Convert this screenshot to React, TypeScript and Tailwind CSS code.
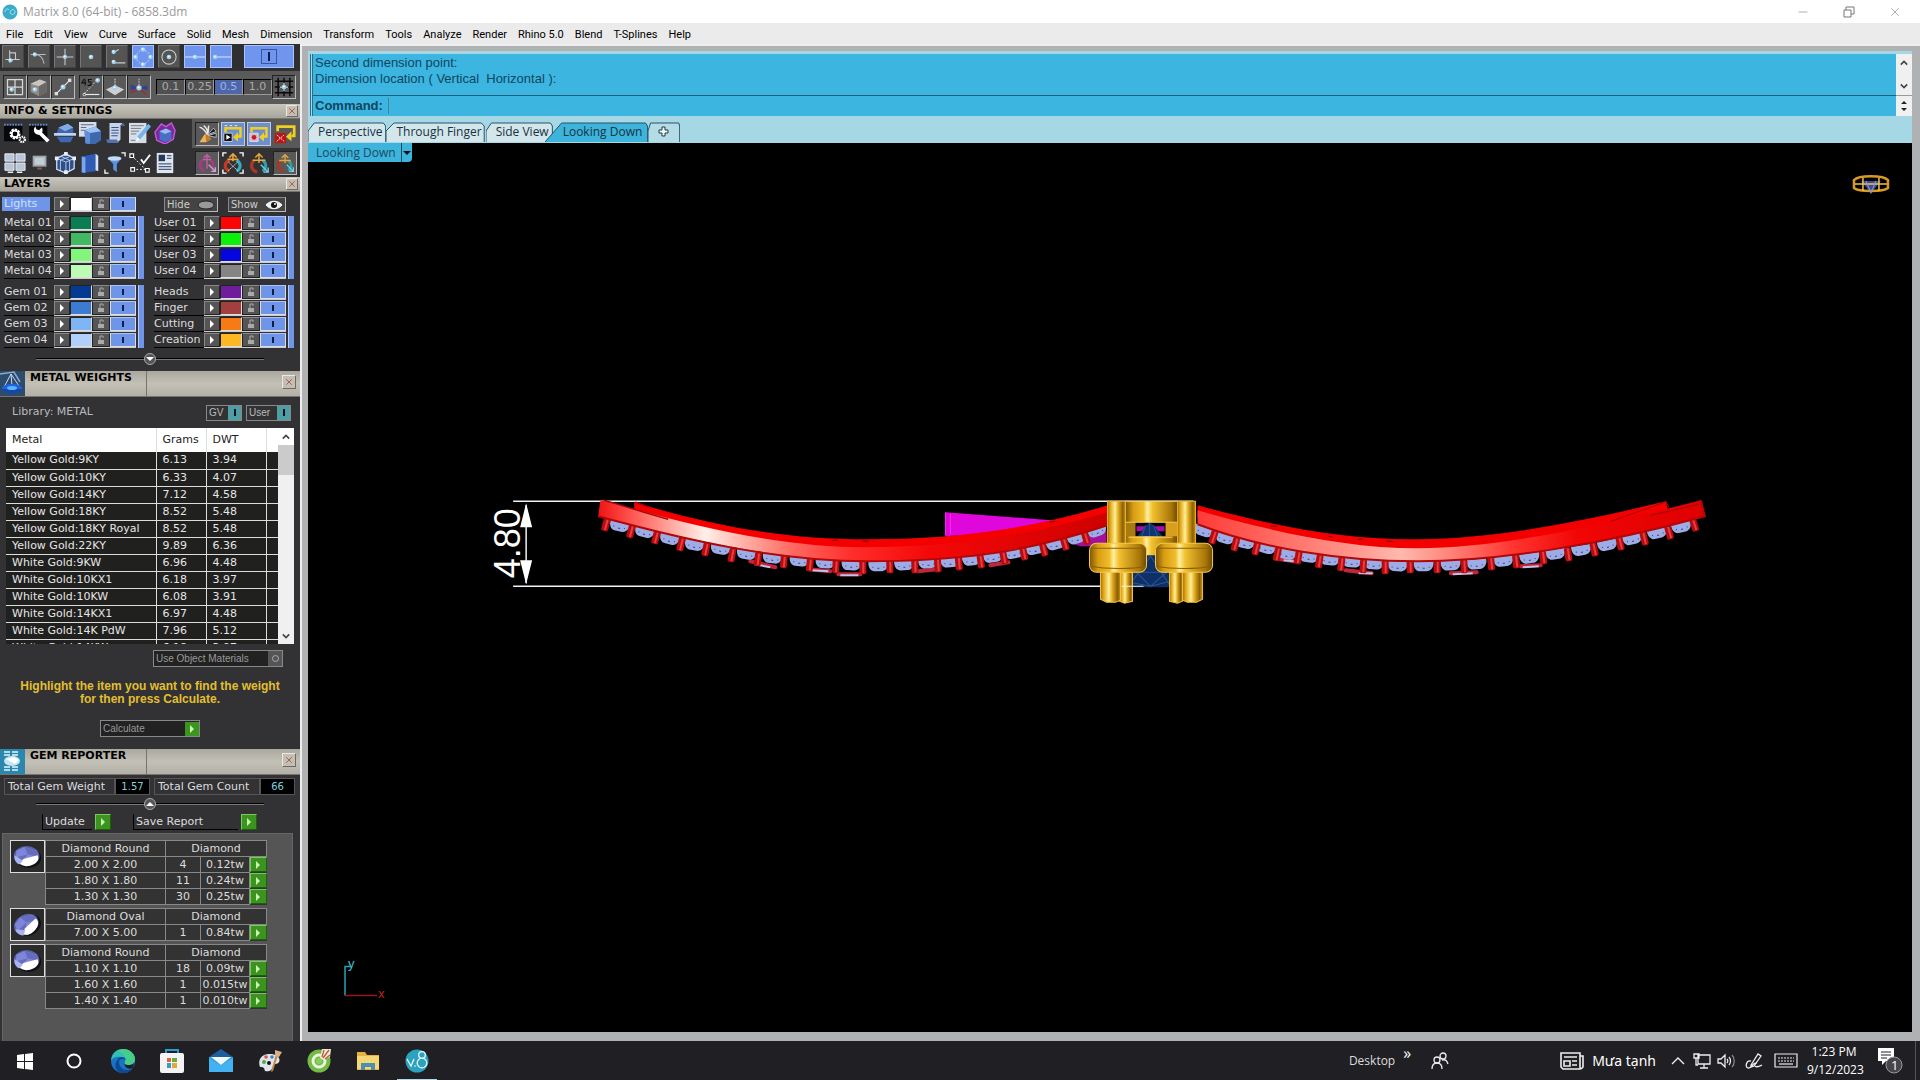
import React from 'react';
import { Minus, X } from 'lucide-react';

type Point = [number, number];

const menuItems = [
  'File', 'Edit', 'View', 'Curve', 'Surface', 'Solid', 'Mesh', 'Dimension', 'Transform',
  'Tools', 'Analyze', 'Render', 'Rhino 5.0', 'Blend', 'T-Splines', 'Help',
];

const metals = [
  ['Yellow Gold:9KY', '6.13', '3.94'],
  ['Yellow Gold:10KY', '6.33', '4.07'],
  ['Yellow Gold:14KY', '7.12', '4.58'],
  ['Yellow Gold:18KY', '8.52', '5.48'],
  ['Yellow Gold:18KY Royal', '8.52', '5.48'],
  ['Yellow Gold:22KY', '9.89', '6.36'],
  ['White Gold:9KW', '6.96', '4.48'],
  ['White Gold:10KX1', '6.18', '3.97'],
  ['White Gold:10KW', '6.08', '3.91'],
  ['White Gold:14KX1', '6.97', '4.48'],
  ['White Gold:14K PdW', '7.96', '5.12'],
  ['White Gold:14KW', '6.18', '3.97'],
];

const gemGroups = [
  {
    name: 'Diamond Round',
    oval: false,
    rows: [['2.00 X 2.00', '4', '0.12tw'], ['1.80 X 1.80', '11', '0.24tw'], ['1.30 X 1.30', '30', '0.25tw']],
  },
  { name: 'Diamond Oval', oval: true, rows: [['7.00 X 5.00', '1', '0.84tw']] },
  {
    name: 'Diamond Round',
    oval: false,
    rows: [['1.10 X 1.10', '18', '0.09tw'], ['1.60 X 1.60', '1', '0.015tw'], ['1.40 X 1.40', '1', '0.010tw']],
  },
];

const metalLayers = [['Metal 01', '#0a7d52'], ['Metal 02', '#43b863'], ['Metal 03', '#82f57c'], ['Metal 04', '#bdfcb5']];
const gemLayers = [['Gem 01', '#053a93'], ['Gem 02', '#3d7bd0'], ['Gem 03', '#7fb5f5'], ['Gem 04', '#b0d0fa']];
const userLayers = [['User 01', '#fa0505'], ['User 02', '#0cf00c'], ['User 03', '#0505dd'], ['User 04', '#858585']];
const otherLayers = [['Heads', '#6f1d9a'], ['Finger', '#a33f3f'], ['Cutting', '#f77b14'], ['Creation', '#fcb823']];

/* ---------- toolbar icons, all on a 24 x 24 grid ---------- */

const Dot = ({ x, y, r = 2 }: { x: number; y: number; r?: number }) => (
  <g>
    <circle cx={x} cy={y} r={r} fill="#9fd0ee" />
    <circle cx={x - 0.5} cy={y - 0.7} r={r / 2.4} fill="#f2fbff" />
  </g>
);

const icons: Record<string, React.ReactNode> = {
  ortho: <><path d="M3 15h17M8 4v15M8 7h7v8" stroke="#c9c9c9" strokeWidth="1.3" fill="none" /><Dot x={9} y={16} r={2.6} /></>,
  tangent: <><path d="M2 9h18M7 9c6 0 10 4 11 11" stroke="#b9b9b9" strokeWidth="1.3" fill="none" /><Dot x={7} y={9} r={2.6} /></>,
  cross: <><path d="M2 12h20M12 2v20" stroke="#c9c9c9" strokeWidth="1.3" /><Dot x={12} y={12} r={2.6} /></>,
  point: <Dot x={12} y={12} r={2.8} />,
  near: <><path d="M8 19h14M9 6l5-3" stroke="#c9c9c9" strokeWidth="1.3" /><Dot x={8} y={6} r={2.6} /><Dot x={8} y={18} r={2.6} /></>,
  quad: <><circle cx="12" cy="12" r="8" stroke="#dbe7ff" fill="none" strokeDasharray="2 2" /><Dot x={12} y={3} r={2.8} /><Dot x={12} y={21} r={2.8} /><Dot x={3} y={12} r={2.8} /><Dot x={21} y={12} r={2.8} /></>,
  center: <><circle cx="12" cy="12" r="8.5" stroke="#c9c9c9" strokeWidth="1.3" fill="none" /><Dot x={12} y={12} r={2.8} /></>,
  mid: <><path d="M0 12h24" stroke="#d5e2ff" strokeWidth="1.3" /><Dot x={12} y={12} r={2.8} /></>,
  end: <><path d="M6 12h18" stroke="#d5e2ff" strokeWidth="1.3" /><Dot x={5} y={12} r={2.8} /></>,
  panes: <><path d="M3 3h18v18H3zM12 3v18M3 12h18" stroke="#d8d8d8" strokeWidth="1.5" fill="none" /><Dot x={8} y={15} r={2.8} /></>,
  cube: <><path d="M2 8l11-5 8 3v12l-9 5-10-5z" fill="#8e8a84" /><path d="M2 8l11-5 8 3-9 5z" fill="#c9c6c0" /><path d="M12 11l9-5v12l-9 5z" fill="#6b6864" /><Dot x={7} y={15} r={2.8} /></>,
  line: <><path d="M4 20L20 4" stroke="#e6e6e6" strokeWidth="1.4" /><rect x="2" y="18" width="4" height="4" fill="#ddd" /><rect x="18" y="2" width="4" height="4" fill="#ddd" /><Dot x={12} y={12} r={3} /></>,
  angle: <><path d="M4 21h18" stroke="#e8e8e8" strokeWidth="1.4" /><circle cx="4" cy="21" r="1.600" fill="#555" stroke="#eee" /><path d="M4 20L18 5" stroke="#fff" strokeDasharray="2 2" /><path d="M4 2L1 7h5M5 3v7M13 3H9v3h3v4H8" stroke="#111" strokeWidth="1.3" fill="none" /><Dot x={20} y={4} r={2.8} /></>,
  plane: <><path d="M1 15l11-5 11 5-11 7z" fill="#cfcfcf" /><path d="M12 2v9" stroke="#eee" strokeDasharray="2 1" /><Dot x={12} y={13} r={3} /></>,
  axes: <><path d="M12 13V1" stroke="#e8d8f0" strokeDasharray="2 1" /><path d="M12 13L2 9v7zM12 13l10-3v6z" fill="#363f92" /><path d="M12 14l-10 5M12 14l9 7" stroke="#b3232f" strokeWidth="1.6" /><Dot x={12} y={13} r={3.2} /></>,
  grid: <><path d="M5 1v22M12 1v22M19 1v22M1 5h22M1 12h22M1 19h22" stroke="#0a0a0a" strokeWidth="1.8" /><path d="M12 7v10M7 12h10" stroke="#cfe4ef" strokeWidth="1.5" /><Dot x={12} y={12} r={2.8} /></>,
  gears: <><path d="M0 3h20v18H0z" fill="#07080c" /><path d="M0 3h20" stroke="#6384bd" strokeWidth="2" strokeDasharray="2 1" /><circle cx="12" cy="13" r="4.500" fill="none" stroke="#fff" strokeWidth="3" strokeDasharray="2.400 1" /><circle cx="12" cy="13" r="3.600" fill="none" stroke="#fff" strokeWidth="2" /><circle cx="20" cy="19" r="2.800" fill="none" stroke="#fff" strokeWidth="2.600" strokeDasharray="1.600 .8" /></>,
  wrench: <><path d="M0 3h20v18H0z" fill="#07080c" /><path d="M0 3h20" stroke="#6384bd" strokeWidth="2" strokeDasharray="2 1" /><path d="M12 12l9 9" stroke="#fff" strokeWidth="4" /><path d="M7 5c-3 3-2 8 3 9 4 0 6-4 4-8l-3 3-3-1z" fill="#fff" /></>,
  layersBlue: <><path d="M5 6l10-4 6 4v6H3z" fill="#4166a8" /><path d="M5 6l10-4 6 4-9 4z" fill="#82abe5" /><path d="M0 12h24v3H0z" fill="#bcd4f5" /><path d="M3 16h18l-3 6H7z" fill="#3e68b5" /></>,
  boxDoc: <><path d="M0 0h19v16H0z" fill="#d7dde8" /><path d="M2 3h14M2 6h6M2 9h5" stroke="#5b6c8c" strokeWidth="1.2" /><path d="M6 9l12-4 6 5v10l-6 4H7z" fill="#3d69ad" /><path d="M6 9l12-4 6 5-12 2z" fill="#9dc1f2" /><path d="M6 9l6 3v12l-5-1z" fill="#5d8fd6" /></>,
  scroll: <><path d="M6 1h14l-2 3v15l-3 3H4l2-3z" fill="#c8d4ea" /><path d="M8 6h8M8 9h8M8 12h8M8 15h7" stroke="#37538d" strokeWidth="1.3" /><path d="M17 4l4-3 2 3zM2 19h12l2 4H4z" fill="#5572ad" /></>,
  write: <><path d="M0 1h19v22H0z" fill="#d8dee6" /><path d="M2 4h14M2 7h11M2 10h9M2 13h6M2 20h5" stroke="#6a7484" /><path d="M21 2l3 3-12 14-5 3 2-6z" fill="#73b4ec" /><path d="M9 16l3 3-5 3z" fill="#fff" /></>,
  gemBox: <><path d="M1 11L8 2l5 3 6-4 4 8-2 10-9 5-9-4z" fill="#7a2a9b" stroke="#c857de" strokeWidth="1.5" /><path d="M6 10l7-3 6 3v9l-7 3-6-3z" fill="#486fc4" /><path d="M6 10l7-3 6 3-7 3z" fill="#98baf0" /></>,
  tools: <><path d="M3 4c3 0 8 5 9 9M8 2c3 2 5 7 5 11M14 2l-1 11" stroke="#e6e6e6" strokeWidth="1.8" fill="none" /><path d="M12 13l8-8 3 4zM13 14l10-3v5z" fill="#1b1b1b" stroke="#ccc" /><path d="M3 22l7-11 7 7-6 4z" fill="#f0b35a" /><path d="M10 11l7 7-6 4z" fill="#c37927" /></>,
  loopPlay: <><path d="M2 2h3M8 2h3M14 2h3" stroke="#fff" /><path d="M3 10V5h18v10h-3" stroke="#f0cf25" strokeWidth="3" fill="none" /><path d="M18 10v11l-6-5z" fill="#f0cf25" /><path d="M1 11h10v10H1z" fill="#111" stroke="#ddd" /><path d="M4 13l5 3-5 3z" fill="#fff" /></>,
  loopRec: <><path d="M3 10V5h18v10h-3" stroke="#f0cf25" strokeWidth="3" fill="none" /><path d="M18 10v11l-6-5z" fill="#f0cf25" /><path d="M1 11h10v10H1z" fill="#d8b7c6" stroke="#e9e0e9" /><circle cx="6" cy="16" r="2.800" fill="#c81a2f" /></>,
  loopStop: <><path d="M4 9V4h18v10h-3" stroke="#f0cf25" strokeWidth="3" fill="none" /><path d="M19 9v11l-6-5z" fill="#f0cf25" /><path d="M1 11h12v11H1z" fill="#bf1414" /><path d="M3 13l8 7M11 13l-8 7" stroke="#fff" strokeDasharray="2 1" /></>,
  views: <><path d="M1 2h10v8H1zM13 2h10v8H13zM1 12h10v8H1zM13 12h10v8H13z" fill="#b9c6d8" stroke="#eef2f8" /><path d="M4 22h6M14 22h6" stroke="#eee" strokeWidth="1.6" /></>,
  monitor: <><path d="M4 4h15v12H4z" fill="#9fa6ab" /><path d="M6 6h11v8H6z" fill="#c3cdd4" /><path d="M9 17h5v2H9z" fill="#8b5f50" /></>,
  wireCube: <><path d="M3 7l10-5 9 5v11l-9 5-10-4z" fill="#2f4f85" stroke="#cfe0fb" strokeWidth="1.4" /><path d="M3 7l10 4 9-4M13 11v12M8 5l9 4v12M7 21V9l10-4" stroke="#b7cff5" fill="none" /><path d="M1 5h4v4H1zM11 0h4v4h-4zM20 5h4v4h-4zM11 20h4v4h-4z" fill="#e9f0fc" /></>,
  book: <><path d="M3 5l15-3v19L3 23z" fill="#2d5bb6" /><path d="M3 5l4 1v17l-4-1z" fill="#7ca6ea" /><path d="M18 2l3 2v17l-3-1z" fill="#d6e2f6" /></>,
  funnel: <><path d="M4 7h15l-5 6v9l-4-3v-6z" fill="#5b92dd" /><ellipse cx="11.500" cy="7" rx="7.500" ry="2.500" fill="#c4dcfa" /><path d="M19 1h4v4M1 19v4h4" stroke="#fff" strokeWidth="1.4" fill="none" /></>,
  nodes: <><path d="M3 4l16 16M4 19h14" stroke="#fff" strokeDasharray="2 2" /><path d="M1 2h4v4H1zM2 17h4v4H2zM18 18h4v4h-4z" fill="#222" stroke="#fff" strokeWidth="1.3" /><path d="M13 8l3 4 7-9" stroke="#fff" strokeWidth="2" fill="none" /></>,
  card: <><path d="M3 1h18v22H3z" fill="#dfe6ef" /><path d="M5 3h7v7H5z" fill="#26375a" /><path d="M14 4h5M14 7h5M5 13h14M5 16h14M5 19h14" stroke="#4b5f85" strokeWidth="1.4" /></>,
  ringPink: <><path d="M9 21c-6-2-7-9-2-13M16 8c4 3 5 9 1 13" stroke="#a33b83" strokeWidth="3.400" fill="none" /><path d="M12 2v17M7 8h10M8 6l4-4 4 4" stroke="#cf5caa" strokeWidth="1.600" fill="none" /><path d="M14 14l8 8M22 17v5h-5" stroke="#c8a7ca" strokeWidth="1.600" fill="none" /></>,
  ringFrame: <><path d="M8 21c-6-3-6-9 0-12" stroke="#c63921" strokeWidth="3.400" fill="none" /><path d="M16 9c5 3 5 9 0 12" stroke="#33adc0" strokeWidth="3.400" fill="none" /><path d="M12 2v8M6 8h12M8 6l4-4 4 4" stroke="#e8a63a" strokeWidth="1.800" fill="none" /><path d="M7 11l11 10M17 11L6 21" stroke="#ddd" strokeDasharray="2 1" /><path d="M1 5V1h4M19 1h4v4M23 19v4h-4M5 23H1v-4" stroke="#fff" strokeWidth="1.500" fill="none" /></>,
  ringAxis: <><path d="M10 22c-7-2-8-9-3-13" stroke="#a83726" strokeWidth="3.600" fill="none" /><path d="M16 9c4 3 5 8 0 12" stroke="#2f9fb0" strokeWidth="3.200" fill="none" /><path d="M12 2v10M5 9h14M8 6l4-4 4 4" stroke="#e8a63a" strokeWidth="1.600" fill="none" /><path d="M14 14l8 8M22 17v5h-5" stroke="#74d3e4" strokeWidth="1.500" fill="none" /></>,
};

const Icon = ({ name, className = 'w-6 h-6' }: { name: string; className?: string }) => (
  <svg viewBox="0 0 24 24" className={`${className} shrink-0`} aria-hidden="true">{icons[name]}</svg>
);

const SnapButton = ({ name, active = false }: { name: string; active?: boolean }) => (
  <button
    aria-label={name}
    className={`w-[22px] h-[23px] border flex items-center justify-center ${
      active ? 'bg-[#6f95ee] border-[#a9c2fb]' : 'bg-[#545454] border-t-[#777] border-l-[#777] border-r-[#444] border-b-[#444]'
    }`}
  >
    <Icon name={name} className="w-5 h-5" />
  </button>
);

const BevelButton = ({ name }: { name: string }) => (
  <button aria-label={name} className="w-6 h-6 bg-[#595959] border border-t-[#222] border-l-[#222] border-r-[#bbb] border-b-[#bbb] flex items-center justify-center">
    <Icon name={name} className="w-5 h-5" />
  </button>
);

const CloseButton = ({ className = 'w-3 h-3' }: { className?: string }) => (
  <button aria-label="Close panel" className={`${className} bg-[#c4bfb4] border border-t-[#ece8e0] border-l-[#ece8e0] border-r-[#6f6a63] border-b-[#6f6a63] flex items-center justify-center text-[#a34b41]`}>
    <X size={10} strokeWidth={2} />
  </button>
);

const GreenArrow = ({ className = 'w-4 h-4' }: { className?: string }) => (
  <button aria-label="Run" className={`${className} bg-[#3c9420] border border-t-[#7bc860] border-l-[#7bc860] border-r-[#1d5f0b] border-b-[#1d5f0b] flex items-center justify-center`}>
    <svg viewBox="0 0 8 8" className="w-2 h-2"><path d="M2 0l4 4-4 4z" fill="#c9f7ae" /></svg>
  </button>
);

const PanelHeader = ({ title }: { title: string }) => (
  <header className="h-[15px] flex items-center justify-between pl-1 pr-[2px] bg-linear-to-b from-[#c9c6bd] to-[#a7a49b] border-b border-[#77746d]">
    <h2 className="text-[11px] leading-4 font-bold text-black">{title}</h2>
    <CloseButton />
  </header>
);

const ToolHeader = ({ title, children }: { title: string; children: React.ReactNode }) => (
  <header className="h-[26px] flex bg-linear-to-b from-[#aaa79f] via-[#c3c0b6] to-[#b3b0a7] border-b border-[#77746d]">
    <div className="w-[25px] shrink-0 bg-[#2d4b6a]">{children}</div>
    <h2 className="w-[122px] pl-[5px] border-r border-[#77746d] text-[11px] leading-[14px] font-bold text-black whitespace-nowrap">{title}</h2>
    <div className="flex-1 flex items-start justify-end pt-1 pr-1"><CloseButton className="w-[14px] h-[14px]" /></div>
  </header>
);

const SectionSlider = ({ up = false }: { up?: boolean }) => (
  <div className="flex items-center px-9 h-[14px]">
    <div className="flex-1 h-[2px] bg-black border-b border-[#777]" />
    <button aria-label="Toggle section" className="w-3 h-3 rounded-full bg-[#555] border border-[#aaa] flex items-center justify-center">
      <svg viewBox="0 0 8 8" className="w-2 h-2"><path d={up ? 'M0 6l4-4 4 4z' : 'M0 2l4 4 4-4z'} fill="#fff" /></svg>
    </button>
    <div className="flex-1 h-[2px] bg-black border-b border-[#777]" />
  </div>
);

const LayerControls = ({ color }: { color: string }) => (
  <div className="flex h-[15px] border-b border-[#ccc]">
    <button aria-label="Options" className="w-4 bg-[#555] border border-t-[#888] border-l-[#888] border-[#222] flex items-center justify-center">
      <svg viewBox="0 0 8 8" className="w-2 h-2"><path d="M2 0l4 4-4 4z" fill="#fff" /></svg>
    </button>
    <button aria-label="Color" className="w-[22px] border border-t-[#222] border-l-[#222] border-[#ddd]" style={{ backgroundColor: color }} />
    <button aria-label="Lock" className="w-[18px] bg-[#555] border border-t-[#888] border-l-[#222] border-[#222] flex items-center justify-center">
      <svg viewBox="0 0 10 10" className="w-[10px] h-[10px]">
        <path d="M2 5h6v4H2z" fill="#aaa" />
        <path d="M4 5V1h3v2" stroke="#aaa" fill="none" />
      </svg>
    </button>
    <button aria-label="Visible" className="w-[26px] bg-[#6f95e8] border border-t-[#a9c2fb] border-l-[#ddd] border-[#ddd] flex items-center justify-center">
      <span className="w-[2px] h-[6px] bg-[#0d1c4a]" />
    </button>
  </div>
);

const LayerGroup = ({ layers }: { layers: string[][] }) => (
  <div className="flex gap-[2px]">
    <div className="flex flex-col gap-px">
      {layers.map(([name, color]) => (
        <div key={name} className="flex">
          <span className="w-[50px] h-[15px] leading-[13px] border-b border-black text-[11px] text-[#ddd] whitespace-nowrap">{name}</span>
          <LayerControls color={color} />
        </div>
      ))}
    </div>
    <div className="w-[6px] bg-[#6f95e8] border-l border-[#b9ccf7]" />
  </div>
);

const GemThumb = ({ oval }: { oval: boolean }) => (
  <div className="w-[35px] h-[33px] border border-[#ddd] bg-[#2b2b2b] shrink-0">
    <svg viewBox="0 0 36 33" className="w-full h-full">
      <g transform={oval ? 'rotate(-28 18 17)' : undefined}>
        <ellipse cx="19" cy="18" rx="14" ry="11" fill="#111" />
        <ellipse cx="17" cy="16" rx="14" ry="11" fill="#5a63a8" />
        <path d="M6 10l9-4 13 4 2 7-12 2-13-1z" fill="#7d86d8" />
        <path d="M15 6l3 8 12 3-2-7zM4 18l14-4-6 9z" fill="#666dbf" />
        <path d="M9 23l5-4 15-4c3 5-2 11-12 12-4 0-7-2-8-4z" fill="#fff" />
        <path d="M4 15c-1 5 2 9 5 10l4-4z" fill="#aab3f0" />
      </g>
    </svg>
  </div>
);

/* ---------- viewport drawing ---------- */

const leftGems: Point[] = [
  [619, 527], [644, 533], [669, 540], [694, 546], [720, 550], [746, 555], [772, 559], [799, 562], [825, 564], [851, 566], [878, 567],
  [904, 566], [928, 564], [950, 563], [972, 561], [993, 558], [1014, 554], [1035, 550], [1056, 545], [1077, 539], [1097, 532],
];
const leftProngs: Point[] = [
  [606, 525], [631, 532], [656, 538], [681, 545], [706, 550], [732, 556], [758, 560], [784, 562], [810, 565], [836, 567], [863, 568],
  [890, 567], [915, 567], [938, 566], [959, 564], [981, 562], [1004, 558], [1024, 554], [1044, 550], [1065, 544], [1086, 538],
];
const rightGems: Point[] = [
  [1203, 532], [1224, 539], [1244, 544], [1265, 549], [1286, 555], [1308, 558], [1329, 561], [1351, 563], [1373, 565], [1397, 567], [1423, 567],
  [1450, 566], [1476, 565], [1503, 562], [1529, 559], [1555, 555], [1581, 551], [1607, 546], [1632, 540], [1657, 534], [1681, 528],
];
const rightProngs: Point[] = [
  [1213, 538], [1235, 545], [1256, 549], [1277, 555], [1298, 558], [1319, 562], [1341, 565], [1363, 567], [1385, 568], [1410, 567], [1437, 567],
  [1464, 567], [1491, 564], [1516, 562], [1543, 558], [1568, 555], [1594, 550], [1620, 544], [1644, 539], [1669, 533], [1694, 525],
];

// tilt of the stone at index i, taken from its neighbours
const tilt = (points: Point[], i: number) => {
  const a = points[Math.max(i - 1, 0)];
  const b = points[Math.min(i + 1, points.length - 1)];
  return (Math.atan2(b[1] - a[1], b[0] - a[0]) * 180) / Math.PI;
};

const Stones = ({ gems, prongs }: { gems: Point[]; prongs: Point[] }) => (
  <g>
    {gems.map(([x, y], i) => (
      <g key={x} transform={`translate(${x} ${y}) rotate(${tilt(gems, i)})`}>
        <path d="M-10 -6H10V-3C9 2 6 4 3 4H-4C-7 4 -10 1 -10 -4z" fill="#9dace6" />
        <path d="M-6 0h1M-1 1h2M5 0h1" stroke="#39406e" />
      </g>
    ))}
    {prongs.map(([x, y], i) => (
      <g key={x} transform={`translate(${x} ${y}) rotate(${tilt(prongs, i)})`}>
        <rect x="-4" y="-8" width="7" height="14" rx="2" fill="#b80b10" />
        <rect x="-1" y="-7" width="2" height="12" fill="#ea3d3d" />
      </g>
    ))}
  </g>
);

const Scene = () => (
  <svg viewBox="308 143 1603 888" preserveAspectRatio="xMinYMin meet" className="w-full h-full block">
    <defs>
      <linearGradient id="bandLeft" gradientUnits="userSpaceOnUse" x1="598" y1="0" x2="1107" y2="0">
        <stop offset="0" stopColor="#f01212" />
        <stop offset="0.07" stopColor="#ff5a55" />
        <stop offset="0.14" stopColor="#ffa59c" />
        <stop offset="0.21" stopColor="#fff0ea" />
        <stop offset="0.28" stopColor="#ffb5ab" />
        <stop offset="0.38" stopColor="#ff6a63" />
        <stop offset="0.5" stopColor="#ff2d2a" />
        <stop offset="0.65" stopColor="#f40808" />
        <stop offset="1" stopColor="#cf0000" />
      </linearGradient>
      <linearGradient id="bandRight" gradientUnits="userSpaceOnUse" x1="1197" y1="0" x2="1704" y2="0">
        <stop offset="0" stopColor="#ff3a36" />
        <stop offset="0.15" stopColor="#ff6a62" />
        <stop offset="0.3" stopColor="#ff948a" />
        <stop offset="0.4" stopColor="#ffb9ae" />
        <stop offset="0.5" stopColor="#ff8278" />
        <stop offset="0.62" stopColor="#ff3631" />
        <stop offset="0.75" stopColor="#f20505" />
        <stop offset="1" stopColor="#de0000" />
      </linearGradient>
      <linearGradient id="gold">
        <stop offset="0" stopColor="#a36f05" />
        <stop offset="0.15" stopColor="#e0a516" />
        <stop offset="0.42" stopColor="#fff09a" />
        <stop offset="0.6" stopColor="#e3ab1c" />
        <stop offset="0.85" stopColor="#8a5f08" />
        <stop offset="1" stopColor="#c9930f" />
      </linearGradient>
      <linearGradient id="goldWide">
        <stop offset="0" stopColor="#7b5506" />
        <stop offset="0.15" stopColor="#d99d12" />
        <stop offset="0.35" stopColor="#f0bd2c" />
        <stop offset="0.42" stopColor="#fff0a0" />
        <stop offset="0.52" stopColor="#f2c02e" />
        <stop offset="0.88" stopColor="#a87508" />
        <stop offset="1" stopColor="#6b4a06" />
      </linearGradient>
    </defs>

    {/* dimension */}
    <g stroke="#f2f2f2" fill="#fff">
      <path d="M513 501h680M513 586h630M526 505v78" strokeWidth="1.5" fill="none" />
      <path d="M526 503l6 24h-12zM526 584l6-24h-12z" stroke="none" />
      <text transform="translate(520 578) rotate(-90)" fontFamily="Liberation Sans, sans-serif" fontSize="36" stroke="none">4.80</text>
    </g>

    {/* left arm */}
    <path d="M945 512l106 8v10l-106 6z" fill="#e007dd" />
    <path d="M945 512v23M950 514v20" stroke="#f62cf3" />
    <path d="M1068 542l38-12v16h-26z" fill="#a3109a" />
    <path d="M750 561l25 6M808 569l22 2M838 574h22M918 571l18-2M990 565l18-3" stroke="#c0263a" strokeWidth="4" strokeLinecap="round" />
    <path d="M754 564l16 3M812 570l16 1M840 575h18" stroke="#c3c0ea" strokeWidth="2" />
    <Stones gems={leftGems} prongs={leftProngs} />
    <path d="M634 502C720 528 790 539 866 539S1020 532 1107 505V525C1020 552 940 558 866 557S690 534 634 512z" fill="#f50000" />
    <path d="M604 500C690 526 780 547 866 547S1030 535 1107 512V525C1020 554 940 561 866 561S690 541 598 516L600 501z" fill="url(#bandLeft)" />
    <path d="M598 516C690 541 780 561 866 561S1020 554 1107 525" stroke="#b00808" strokeWidth="2" fill="none" />
    <path d="M604 500C625 506 645 513 668 519M635 502l14 5" stroke="#a60606" strokeWidth="1.5" fill="none" />
    <path d="M832 540h5M862 541h6M1049 522l6-1" stroke="#7a0000" />

    {/* right arm */}
    <path d="M1280 559l14 2M1345 570l26 3M1450 573l26-1M1520 566l20-1" stroke="#c0263a" strokeWidth="4" strokeLinecap="round" />
    <path d="M1283 560l10 1M1358 573h14M1452 574l20-1M1522 567l16-1" stroke="#c3c0ea" strokeWidth="2" />
    <Stones gems={rightGems} prongs={rightProngs} />
    <path d="M1197 505C1267 524 1340 540 1417 539S1570 524 1665 501l2 8C1580 535 1500 556 1417 556S1260 534 1197 518z" fill="#f30000" />
    <path d="M1197 510C1260 528 1340 548 1417 548S1590 528 1700 500l4 16C1600 545 1500 561 1417 561S1260 548 1197 524z" fill="url(#bandRight)" />
    <path d="M1197 524C1260 548 1340 561 1417 561S1600 545 1704 516L1700 500" stroke="#b00808" strokeWidth="2" fill="none" />
    <path d="M1610 521l54-19M1650 515l48-11M1665 501l3 6" stroke="#a60606" fill="none" />
    <path d="M1270 526h6M1328 536l4 1M1357 539h5M1386 541h6" stroke="#7a0000" />

    {/* head */}
    <rect x="1134" y="521" width="32" height="16" fill="#050208" />
    <path d="M1136 526h28v5h-28z" fill="#a511a8" />
    <path d="M1136 537l10-12 3-3 4 3 10 12z" fill="#0f3570" />
    <path d="M1149 522v15M1145 525l-4 12M1153 525l4 12" stroke="#255394" fill="none" />
    <path d="M1145 553h10l26 27-13 7h-40l-8-7z" fill="#0f2f68" />
    <path d="M1150 556l-22 30M1150 556l20 30M1124 581l26 5 28-7M1136 572h30l-16 14z" stroke="#2c5799" fill="none" />
    <rect x="1125" y="501" width="52" height="21" fill="url(#goldWide)" />
    <rect x="1125" y="522" width="10" height="16" fill="#a97a10" />
    <rect x="1165" y="522" width="12" height="16" fill="#d79f1c" />
    <path d="M1123 536h54v10l-16 2-6 7h-10l-6-7-16-2z" fill="url(#goldWide)" />
    <path d="M1125 501h52M1125 522h52M1128 537h44" stroke="#f7cf5e" />
    <rect x="1107" y="501" width="18" height="43" fill="url(#gold)" stroke="#e8b02b" />
    <rect x="1177" y="501" width="18" height="43" fill="url(#gold)" stroke="#e8b02b" />
    <path d="M1119 572h13v29l-8 2-5-2z" fill="url(#gold)" stroke="#f0bf43" />
    <path d="M1100 571h20v29l-5 2h-9l-6-3z" fill="url(#gold)" stroke="#f0bf43" />
    <path d="M1169 572h13v29l-5 2-8-2z" fill="url(#gold)" stroke="#f0bf43" />
    <path d="M1182 571h20v28l-6 3h-9l-5-2z" fill="url(#gold)" stroke="#f0bf43" />
    <rect x="1089" y="543" width="57" height="29" rx="7" fill="url(#goldWide)" stroke="#f7c948" />
    <rect x="1155" y="543" width="57" height="29" rx="7" fill="url(#goldWide)" stroke="#f7c948" />
    <path d="M1090 548h55M1156 548h55M1091 566c14 3 42 3 54 0M1156 566c14 3 42 3 54 0" stroke="#8a5f08" fill="none" />
    <path d="M1121 586h22" stroke="#f2f2f2" />

    {/* orientation ring */}
    <g fill="none">
      <path d="M1860 181h20l-10 12z" fill="#3d4c9a" />
      <path d="M1853 180c5-5 29-5 34 0v8c-5 4-29 4-34 0z" stroke="#d99a24" strokeWidth="2.5" />
      <path d="M1862 178v13M1878 178v13M1854 184h32" stroke="#f0c04c" strokeWidth="1.5" />
      <path d="M1865 181l5 12 5-12" stroke="#8396e0" />
    </g>

    {/* world axes */}
    <path d="M345 995V966h5" stroke="#28a4b5" strokeWidth="1.5" fill="none" />
    <path d="M345 995h32" stroke="#9d1414" strokeWidth="1.5" />
    <text x="348" y="967" fill="#3ec3d4" fontFamily="Liberation Sans, sans-serif" fontSize="13">y</text>
    <text x="378" y="997" fill="#c02020" fontFamily="Liberation Sans, sans-serif" fontSize="13">x</text>
  </svg>
);

const ViewTab = ({ label, active = false }: { label: string; active?: boolean }) => (
  <button className={`relative h-5 text-xs leading-5 text-[#173240] ${active ? 'ml-[-8px] pl-[18px] pr-[6px] z-10' : label === '+' ? 'px-[10px]' : 'pl-[10px] pr-1'}`}>
    <svg viewBox="0 0 100 20" preserveAspectRatio="none" className="absolute inset-0 w-full h-full">
      <path
        d={active ? 'M0 20L16 1H97L99 4V20' : 'M0 20V9L8 1H96L99 4V20'}
        fill={active ? '#3cb4dc' : label === '+' ? '#b4dce6' : '#d3e6ec'}
        stroke="#28536a"
        vectorEffect="non-scaling-stroke"
      />
    </svg>
    <span className="relative">
      {label === '+' ? (
        <svg viewBox="0 0 12 12" className="w-3 h-5"><path d="M4 1h3v3h3v3H7v3H4V7H1V4h3z" fill="#dff" stroke="#333" /></svg>
      ) : label}
    </span>
  </button>
);

/* ---------- taskbar ---------- */

const taskIcons: Record<string, React.ReactNode> = {
  start: <path d="M4 6l7-1v7H4zM12 5l8-1v8h-8zM4 13h7v7l-7-1zM12 13h8v8l-8-1z" fill="#fff" />,
  cortana: <circle cx="12" cy="12" r="6.500" fill="none" stroke="#fff" strokeWidth="2" />,
  edge: (
    <>
      <circle cx="12" cy="12" r="12" fill="#1a73c4" />
      <path d="M0 11C1 3 7 0 12 0c7 0 12 5 12 10 0 4-3 6-7 6-3 0-4-1-3-3 1-5-8-8-14-2z" fill="#2fbfb8" />
      <path d="M12 0c7 0 12 5 12 10 0 4-3 6-7 6-3 0-4-1-3-3 2-3 1-8-8-11 2-1 4-2 6-2z" fill="#4fd27a" opacity=".75" />
      <path d="M8 13c0 6 6 10 13 7-3 4-8 5-11 4-6-2-8-9-2-15 3-2 6-1 7 2-4-2-7-1-7 2z" fill="#0c4a94" />
      <path d="M14 13c-1 2 0 3 3 3 2 0 4 0 6-2l-1 5c-5 2-10-1-8-6z" fill="#1f1f24" />
    </>
  ),
  store: (
    <>
      <path d="M6 6V1h12v5" stroke="#2b9cd0" strokeWidth="2" fill="none" />
      <rect x="0" y="4" width="24" height="20" rx="2" fill="#f3f3f3" />
      <path d="M7 9h4v4H7z" fill="#d9663e" /><path d="M12 9h5v4h-5z" fill="#6ea545" />
      <path d="M7 14h4v5H7z" fill="#3e9bbf" /><path d="M12 14h5v5h-5z" fill="#e0a93a" />
    </>
  ),
  mail: (
    <>
      <path d="M0 8l12-8 12 8v3H0z" fill="#1b5f9e" />
      <path d="M0 8h24v15H0z" fill="#2f9be0" />
      <path d="M2 8h20l-10 8z" fill="#f2f8fc" />
      <path d="M0 23V9l14 9-6 5zM24 9v14H0l12-7z" fill="#43b2f0" />
    </>
  ),
  paint: (
    <>
      <path d="M2 18C-1 10 5 4 12 5c7 0 11 4 9 8-2 3-5 1-6 4 0 4-4 6-8 5-1-2 0-4-5-4z" fill="#dfe5ea" />
      <circle cx="6" cy="13" r="2" fill="#57a544" /><circle cx="8" cy="8" r="1.800" fill="#d2594b" />
      <circle cx="14" cy="8" r="1.800" fill="#3e86c9" /><circle cx="11" cy="14" r="2" fill="#15171c" />
      <path d="M21 3l-6 19-2 1 1-4 5-17z" fill="#c48648" />
      <path d="M17 1l7 2-3 5-4-1z" fill="#d9b184" />
    </>
  ),
  coccoc: (
    <>
      <circle cx="12" cy="12" r="11.500" fill="#73bb45" />
      <circle cx="12" cy="12" r="6" fill="none" stroke="#eaf6dd" strokeWidth="3" />
      <circle cx="12" cy="12" r="3" fill="#8ccb60" />
      <path d="M13 9L15 0h9l-1 8-7 3z" fill="#f3ead8" />
      <path d="M15 8l2-7M16 9l6-8M18 10l5-4" stroke="#bb5a35" strokeWidth="1.300" />
    </>
  ),
  explorer: (
    <>
      <path d="M1 3h8l2 3h12v15H1z" fill="#e9b23e" />
      <path d="M1 7h22v13H1z" fill="#f7d774" />
      <path d="M5 21v-7h14v7h-4v-3H9v3z" fill="#4b8fb9" />
    </>
  ),
  matrix: (
    <>
      <circle cx="12" cy="12" r="11.500" fill="#2ba3c0" />
      <path d="M2 10l4 7 3-7" stroke="#e9fafd" strokeWidth="1.300" fill="none" />
      <circle cx="10" cy="17" r=".8" fill="#e9fafd" />
      <circle cx="17" cy="14" r="4.800" stroke="#e9fafd" strokeWidth="1.300" fill="none" />
      <circle cx="17" cy="6" r="3.300" stroke="#e9fafd" strokeWidth="1.300" fill="none" />
    </>
  ),
};

const Taskbar = () => (
  <footer className="h-10 shrink-0 bg-[#1f1f24] flex items-center text-white font-['Open_Sans','Noto_Sans',sans-serif]">
    <nav className="flex h-full">
      {Object.keys(taskIcons).map((name) => (
        <button
          key={name}
          aria-label={name}
          className="w-[49px] h-full flex flex-col items-center justify-between pt-2"
        >
          <svg viewBox="0 0 24 24" className="w-6 h-6">{taskIcons[name]}</svg>
          {name === 'matrix' && <span className="w-10 h-[2px] bg-[#a8dde6]" />}
        </button>
      ))}
    </nav>
    <div className="ml-auto flex items-center h-full pr-1">
      <span className="text-xs text-[#ddd]">Desktop</span>
      <span className="text-base leading-4 pb-4 ml-2 mr-5">»</span>
      <svg viewBox="0 0 18 18" className="w-[18px] h-[18px] mr-[111px]" fill="none" stroke="#eee" strokeWidth="1.3">
        <circle cx="6" cy="8" r="3" /><path d="M1 17c0-4 2-6 5-6s5 2 5 6" /><circle cx="12" cy="4" r="3" /><path d="M11 8c4-1 5 1 6 4" />
      </svg>
      <svg viewBox="0 0 24 18" className="w-6 h-[18px] mr-2" fill="none" stroke="#eee" strokeWidth="1.6">
        <path d="M1 1h19v16H3l-2-2zM20 4h3v11l-2 2M4 5h13M4 9h6v5H4zM12 9h5M12 13h5" />
      </svg>
      <span className="text-sm mr-[15px] font-['Noto_Sans',sans-serif]">Mưa tạnh</span>
      <svg viewBox="0 0 14 10" className="w-[14px] h-[10px] mr-2" fill="none" stroke="#eee" strokeWidth="1.4"><path d="M1 8l6-6 6 6" /></svg>
      <svg viewBox="0 0 18 18" className="w-[18px] h-[18px] mr-[6px]" fill="none" stroke="#eee" strokeWidth="1.3">
        <path d="M5 3h12v9H5zM11 12v4M7 16h8M1 2h5v4H1zM3 6v7h2" />
      </svg>
      <svg viewBox="0 0 18 18" className="w-[18px] h-[18px] mr-[10px]" fill="none" stroke="#eee" strokeWidth="1.3">
        <path d="M1 7h3l4-4v12l-4-4H1zM10 7c1 1 1 3 0 4M12 5c2 2 2 6 0 8" /><path d="M15 3c3 3 3 9 0 12" stroke="#888" />
      </svg>
      <svg viewBox="0 0 18 18" className="w-[18px] h-[18px] mr-[11px]" fill="none" stroke="#eee" strokeWidth="1.3">
        <path d="M6 13L13 2l3 2-7 10-3 1zM6 9c-5-1-6 6-3 7 4 1 4-6 9-5M10 14c2 2 5 0 7-1" />
      </svg>
      <svg viewBox="0 0 24 16" className="w-6 h-4 mr-[9px]" fill="none" stroke="#eee" strokeWidth="1.2">
        <path d="M1 1h22v13H1z" /><path d="M4 5h16M4 8h16" strokeDasharray="2 1" /><path d="M5 11h14" />
      </svg>
      <div className="w-[54px] text-center text-xs leading-[18px]">
        <div>1:23 PM</div>
        <div>9/12/2023</div>
      </div>
      <svg viewBox="0 0 26 28" className="w-[26px] h-7 ml-4 mr-3">
        <path d="M1 1h16v13H9l-4 4v-4H1z" fill="#fff" />
        <path d="M4 5h10M4 8h10M4 11h6" stroke="#1f1f24" />
        <circle cx="17" cy="18" r="8" fill="#45454b" stroke="#999" />
        <text x="14" y="23" fontSize="13" fill="#fff" fontFamily="Open Sans, sans-serif">1</text>
      </svg>
      <div className="w-px h-full bg-[#555]" />
    </div>
  </footer>
);

/* ---------- side panels ---------- */

const SnapToolbars = () => (
  <>
    <div className="h-[27px] pt-px pl-[2px] flex gap-1 bg-[#2f2f32]">
      {['ortho', 'tangent', 'cross', 'point', 'near', 'quad', 'center', 'mid', 'end'].map((n) => (
        <SnapButton key={n} name={n} active={n === 'quad' || n === 'mid' || n === 'end'} />
      ))}
      <button aria-label="Snap on" className="ml-2 w-[50px] h-[23px] bg-[#6f95ee] border border-[#a9c2fb] flex items-center justify-center">
        <span className="w-4 h-[15px] border border-[#38559f] flex items-center justify-center"><span className="w-[2px] h-[9px] bg-[#0d1c4a]" /></span>
      </button>
    </div>
    <div className="h-[33px] pt-1 pl-[3px] flex bg-[#5a5a5a]">
      <BevelButton name="panes" />
      <BevelButton name="cube" />
      <BevelButton name="line" />
      <div className="w-1" />
      <BevelButton name="angle" />
      <BevelButton name="plane" />
      <BevelButton name="axes" />
      <div className="ml-[5px] mt-1 h-4 flex text-[11px] leading-[14px]">
        {['0.1', '0.25', '0.5', '1.0'].map((n) => (
          <button key={n} className={`w-[29px] border border-t-black border-l-black border-[#999] ${n === '0.5' ? 'bg-[#4d68aa] text-[#9db3e6]' : 'bg-[#505050] text-[#aaa]'}`}>{n}</button>
        ))}
      </div>
      <BevelButton name="grid" />
    </div>
  </>
);

const InfoPanel = () => (
  <section>
    <PanelHeader title="INFO & SETTINGS" />
    <div className="flex h-[58px] bg-[#323235]">
      <div className="grid grid-cols-7 gap-x-px gap-y-1 pt-px pl-[3px] h-fit">
        {['gears', 'wrench', 'layersBlue', 'boxDoc', 'scroll', 'write', 'gemBox', 'views', 'monitor', 'wireCube', 'book', 'funnel', 'nodes', 'card'].map((n) => (
          <button key={n} aria-label={n} className="w-6 h-[26px] flex items-center justify-center"><Icon name={n} className="w-[22px] h-[22px]" /></button>
        ))}
      </div>
      <div className="ml-auto w-[108px]">
        <div className="h-[29px] pl-[3px] pt-[3px] flex gap-[2px] bg-[#585858]">
          <BevelButton name="tools" />
          <button aria-label="Play" className="w-6 h-6 bg-[#6e8fce] border border-[#b8cbef] flex items-center justify-center"><Icon name="loopPlay" className="w-5 h-5" /></button>
          <button aria-label="Record" className="w-6 h-6 bg-[#6e8fce] border border-[#b8cbef] flex items-center justify-center"><Icon name="loopRec" className="w-5 h-5" /></button>
          <button aria-label="Stop" className="w-6 h-6 flex items-center justify-center"><Icon name="loopStop" className="w-[22px] h-[22px]" /></button>
        </div>
        <div className="pl-[3px] pt-[3px] flex gap-[2px]">
          <BevelButton name="ringPink" />
          <button aria-label="Frame" className="w-6 h-6 flex items-center justify-center"><Icon name="ringFrame" className="w-[22px] h-[22px]" /></button>
          <button aria-label="Axis" className="w-6 h-6 flex items-center justify-center"><Icon name="ringAxis" className="w-[22px] h-[22px]" /></button>
          <BevelButton name="ringAxis" />
        </div>
      </div>
    </div>
  </section>
);

const LayersPanel = () => (
  <section className="h-[194px]">
    <PanelHeader title="LAYERS" />
    <div className="pt-[5px] pl-[2px]">
      <div className="flex h-[15px] mb-1">
        <span className="w-12 h-[14px] mr-1 pl-[2px] leading-[13px] text-[11px] bg-[#6f95e8] text-[#cfe0ff]">Lights</span>
        <LayerControls color="#ffffff" />
        <button className="ml-7 w-[54px] h-[15px] px-[2px] flex items-center justify-between bg-[#444] border border-t-[#888] border-l-[#888] border-[#bbb] text-[10px] leading-3 text-[#ccc]">
          Hide
          <svg viewBox="0 0 18 10" className="w-[18px] h-[10px]"><ellipse cx="9" cy="5" rx="8" ry="4" fill="#999" stroke="#222" /></svg>
        </button>
        <button className="ml-[10px] w-[58px] h-[15px] px-[2px] flex items-center justify-between bg-[#444] border border-t-[#888] border-l-[#888] border-[#bbb] text-[10px] leading-3 text-[#ccc]">
          Show
          <svg viewBox="0 0 18 10" className="w-[18px] h-[10px]"><path d="M1 5c4-5 12-5 16 0-4 5-12 5-16 0z" fill="#eee" stroke="#fff" /><circle cx="9" cy="5" r="3" fill="#111" /><circle cx="10" cy="4" r="1" fill="#fff" /></svg>
        </button>
      </div>
      <div className="grid grid-cols-[150px_140px] gap-y-[6px] pl-[2px]">
        <LayerGroup layers={metalLayers} />
        <LayerGroup layers={userLayers} />
        <LayerGroup layers={gemLayers} />
        <LayerGroup layers={otherLayers} />
      </div>
    </div>
    <div className="pt-1"><SectionSlider /></div>
  </section>
);

const ScrollArrow = ({ down = false }: { down?: boolean }) => (
  <svg viewBox="0 0 10 6" className="w-2 h-[6px]" fill="none" stroke="#444" strokeWidth="2"><path d={down ? 'M1 1l4 4 4-4' : 'M1 5l4-4 4 4'} /></svg>
);

const MetalWeights = () => (
  <section className="h-[378px] flex flex-col">
    <ToolHeader title="METAL WEIGHTS">
      <svg viewBox="0 0 25 25" className="w-full h-full">
        <path d="M0 3l14-2 6 10" stroke="#88a9d6" strokeWidth="1.5" fill="none" />
        <path d="M11 3L3 18M11 3l10 15M11 3l1 12" stroke="#c9dafa" fill="none" />
        <ellipse cx="12" cy="17" rx="10" ry="4" fill="#1e63e0" />
        <path d="M2 18c4 6 16 6 20 0" fill="#1647a8" />
        <ellipse cx="12" cy="17" rx="5" ry="2" fill="#56b6ff" />
      </svg>
    </ToolHeader>
    <div className="flex items-center h-[31px] pl-3 pr-[9px] gap-1 text-[11px] text-[#bbb]">
      <span className="mr-auto">Library: METAL</span>
      <button className="w-9 h-4 pl-[2px] flex items-center justify-between border border-[#888] font-['Liberation_Sans',sans-serif] text-[10px] leading-3">
        GV<span className="w-[13px] h-full bg-[#4f9ea3] flex items-center justify-center"><span className="w-[2px] h-[7px] bg-[#112]" /></span>
      </button>
      <button className="w-[45px] h-4 pl-[2px] flex items-center justify-between border border-[#888] font-['Liberation_Sans',sans-serif] text-[10px] leading-3">
        User<span className="w-[13px] h-full bg-[#4f9ea3] flex items-center justify-center"><span className="w-[2px] h-[7px] bg-[#112]" /></span>
      </button>
    </div>
    <div className="mx-[6px] h-[216px] flex overflow-hidden">
      <div className="flex-1 overflow-hidden bg-[#20201e]">
        <table className="w-full table-fixed border-collapse text-[11px] leading-4 text-[#e6e6e6]">
          <thead className="bg-white text-[#222]">
            <tr className="h-6 text-left">
              <th className="w-[150px] pl-[6px] font-normal">Metal</th>
              <th className="w-[50px] pl-[6px] font-normal border-l border-[#ddd]">Grams</th>
              <th className="w-[60px] pl-[6px] font-normal border-l border-[#ddd]">DWT</th>
              <th className="border-l border-[#ddd]" />
            </tr>
          </thead>
          <tbody>
            {metals.map(([name, grams, dwt]) => (
              <tr key={name} className="h-[17px] border-b border-[#ddd]">
                <td className="pl-[6px] whitespace-nowrap">{name}</td>
                <td className="pl-[6px] border-l border-[#ddd]">{grams}</td>
                <td className="pl-[6px] border-l border-[#ddd]">{dwt}</td>
                <td className="border-l border-[#ddd]" />
              </tr>
            ))}
          </tbody>
        </table>
      </div>
      <div className="w-4 bg-[#f0f0f0] flex flex-col items-center justify-between pb-[5px]">
        <div className="w-full flex flex-col items-center pt-[6px] gap-[5px] bg-white">
          <ScrollArrow />
          <div className="w-full h-[30px] bg-[#cbcbcb]" />
        </div>
        <ScrollArrow down />
      </div>
    </div>
    <button className="self-end mt-[6px] mr-[17px] w-[130px] h-[17px] pl-[2px] flex items-center justify-between bg-[#222] border border-[#888] font-['Liberation_Sans',sans-serif] text-[10px] leading-3 text-[#999]">
      Use Object Materials
      <span className="w-[14px] h-full bg-[#555] flex items-center justify-center"><span className="w-[7px] h-[7px] rounded-full border border-[#aaa]" /></span>
    </button>
    <p className="mt-[13px] text-center font-['Liberation_Sans',sans-serif] font-bold text-xs leading-[13px] text-[#e3bf2f] whitespace-nowrap">
      Highlight the item you want to find the weight<br />for then press Calculate.
    </p>
    <button className="self-center mt-[14px] w-[100px] h-[17px] pl-[2px] flex items-center justify-between bg-[#222] border border-[#888] font-['Liberation_Sans',sans-serif] text-[10px] leading-3 text-[#999]">
      Calculate
      <span className="w-[14px] h-[14px] bg-[#3c9420] flex items-center justify-center"><svg viewBox="0 0 8 8" className="w-2 h-2"><path d="M2 0l4 4-4 4z" fill="#c9f7ae" /></svg></span>
    </button>
  </section>
);

const GemReporter = () => (
  <section className="flex-1 flex flex-col text-[11px] text-[#ddd]">
    <ToolHeader title="GEM REPORTER">
      <svg viewBox="0 0 25 25" className="w-full h-full">
        <path d="M0 0h25v25H0z" fill="#2b87ad" />
        <path d="M4 3h6M12 3h6M4 6h6M12 6h6M4 18h6M12 18h6M4 21h6M12 21h6" stroke="#e5f6fb" strokeWidth="1.6" />
        <ellipse cx="12" cy="12" rx="8" ry="5" fill="#bfe6f1" />
        <path d="M6 10l8-2 5 3-4 4z" fill="#fff" />
      </svg>
    </ToolHeader>
    <dl className="mt-[3px] px-1 flex items-center h-[17px] leading-[15px] whitespace-nowrap">
      <dt className="w-[111px] pl-[3px] border border-[#555]">Total Gem Weight</dt>
      <dd className="w-[35px] text-center text-[10px] bg-black border border-[#555] text-[#7fd3de]">1.57</dd>
      <dt className="ml-1 w-[106px] pl-[3px] border border-[#555]">Total Gem Count</dt>
      <dd className="w-[35px] text-center text-[10px] bg-black border border-[#555] text-[#7fd3de]">66</dd>
    </dl>
    <div className="pt-[2px]"><SectionSlider up /></div>
    <div className="my-[3px] pl-[42px] flex items-center leading-[15px]">
      <button className="w-[50px] h-4 pl-[2px] mr-[3px] text-left border-b border-l border-black">Update</button>
      <GreenArrow />
      <button className="ml-[22px] w-[105px] h-4 pl-[2px] mr-[3px] text-left border-b border-l border-black">Save Report</button>
      <GreenArrow />
    </div>
    <div className="ml-[2px] mr-[7px] flex-1 bg-[#555] border-t border-x border-[#666] pt-[6px] pl-[7px] flex flex-col gap-[3px]">
      {gemGroups.map((group, g) => (
        <div key={g} className="flex items-start">
          <GemThumb oval={group.oval} />
          <table className="w-[222px] table-fixed border-collapse bg-[#333] text-center leading-[15px]">
            <colgroup><col className="w-[120px]" /><col className="w-[35px]" /><col className="w-[49px]" /><col /></colgroup>
            <tbody>
              <tr className="h-4">
                <th className="font-normal border border-[#888] p-0">{group.name}</th>
                <th colSpan={3} className="font-normal border border-[#888] p-0">Diamond</th>
              </tr>
              {group.rows.map(([size, count, weight]) => (
                <tr key={size} className="h-4">
                  <td className="border border-[#888] p-0">{size}</td>
                  <td className="border border-[#888] p-0">{count}</td>
                  <td className="border border-[#888] p-0">{weight}</td>
                  <td className="p-0"><GreenArrow className="w-full h-[15px]" /></td>
                </tr>
              ))}
            </tbody>
          </table>
        </div>
      ))}
    </div>
  </section>
);

export default function App() {
  return (
    <div className="min-h-screen flex flex-col bg-[#323235] font-['DejaVu_Sans',sans-serif]">
      <header className="h-[23px] shrink-0 bg-white flex items-center pl-[2px] font-['Open_Sans','Noto_Sans',sans-serif]">
        <svg viewBox="0 0 16 16" className="w-4 h-4 mr-[5px]">
          <circle cx="8" cy="8" r="7.500" fill="#3aabc9" />
          <path d="M3 8c0-3 3-4 4-2M8 9c1-5 5-4 5-1s-4 3-5 1z" stroke="#a8e3f0" fill="none" />
        </svg>
        <h1 className="mr-auto text-xs text-[#999]">Matrix 8.0 (64-bit) - 6858.3dm</h1>
        <button aria-label="Minimize" className="w-[46px] flex justify-center text-[#777]"><Minus size={14} strokeWidth={1} /></button>
        <button aria-label="Restore" className="w-[46px] flex justify-center">
          <svg viewBox="0 0 12 12" className="w-3 h-3" fill="none" stroke="#777"><path d="M1 4h7v7H1zM3 4V1h8v7H8" /></svg>
        </button>
        <button aria-label="Close" className="w-[46px] flex justify-center text-[#777] mr-[2px]"><X size={14} strokeWidth={1} /></button>
      </header>
      <nav className="h-[21px] shrink-0 bg-[#ebebeb] flex items-end gap-[11px] pl-[6px] font-['Roboto',sans-serif] text-[11px] leading-[18px] text-black">
        {menuItems.map((item) => <button key={item}>{item}</button>)}
      </nav>

      <div className="flex-1 flex">
        <aside className="w-[300px] shrink-0 flex flex-col overflow-hidden">
          <SnapToolbars />
          <InfoPanel />
          <LayersPanel />
          <MetalWeights />
          <GemReporter />
        </aside>

        <main className="flex-1 flex flex-col bg-[#b0b1b3] border-l-2 border-t-2 border-[#eee] pt-[5px] pl-[6px] pr-2 pb-[9px]">
          <div className="bg-[#a6d7e4] pt-[3px]">
            <div className="flex ml-[2px] border-l border-[#2d6d8a]">
              <div className="flex-1 ml-px border-l border-[#2d6d8a] font-['Liberation_Sans',sans-serif] text-[13px] text-[#10445f] bg-[#3cb6e0]">
                <div className="h-[42px] pt-px pl-[2px] leading-4 border-b border-[#1f5f7d] whitespace-pre">
                  <p>Second dimension point:</p>
                  <p>{'Dimension location ( Vertical  Horizontal ):'}</p>
                </div>
                <div className="h-5 pl-[2px] flex items-center gap-[5px]">
                  <label htmlFor="command" className="font-bold">Command:</label>
                  <input id="command" className="flex-1 h-4 border-l border-[#4d7f96] outline-none bg-transparent" />
                </div>
              </div>
              <div className="w-4 flex flex-col bg-[#f0f0f0]">
                <div className="h-[42px] flex flex-col items-center justify-between py-[6px] border-b border-[#999]"><ScrollArrow /><ScrollArrow down /></div>
                <div className="h-5 flex flex-col items-center justify-center">
                  <svg viewBox="0 0 8 14" className="w-2 h-[14px]"><path d="M1 5l3-3 3 3zM1 9l3 3 3-3z" fill="#222" /></svg>
                </div>
              </div>
            </div>
            <div className="flex pt-[6px] pb-px font-['Open_Sans','Noto_Sans',sans-serif]">
              <ViewTab label="Perspective" />
              <ViewTab label="Through Finger" />
              <ViewTab label="Side View" />
              <ViewTab label="Looking Down" active />
              <ViewTab label="+" />
            </div>
          </div>
          <div className="relative flex-1 bg-black">
            <Scene />
            <div className="absolute left-0 top-0 h-[19px] flex items-center bg-[#3cb4dc] rounded-br font-['Open_Sans','Noto_Sans',sans-serif] text-xs leading-4 text-[#1c4a60]">
              <span className="pl-2 pr-[5px]">Looking Down</span>
              <button aria-label="Viewport menu" className="w-[11px] h-full border-l border-[#1c4a60] flex items-center justify-center">
                <svg viewBox="0 0 8 8" className="w-2 h-2"><path d="M0 2h8L4 6z" fill="#111" /></svg>
              </button>
            </div>
          </div>
        </main>
      </div>

      <Taskbar />
    </div>
  );
}
